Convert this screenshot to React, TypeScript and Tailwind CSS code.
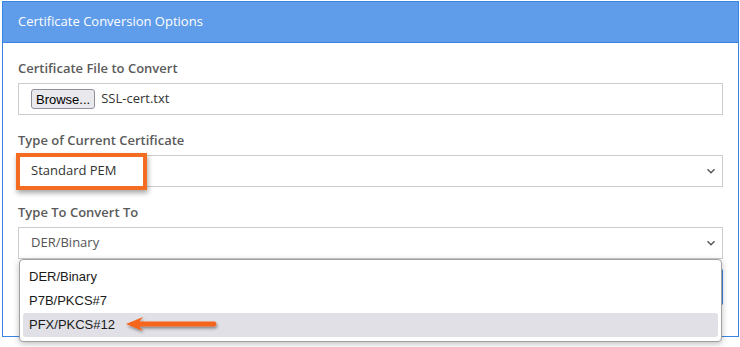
import React from 'react';

const Chevron: React.FC = () => (
  <svg width="10" height="6" viewBox="0 0 10 6" fill="none" className="mr-[6px]">
    <path d="M1.5 1.2l3.5 3.5 3.5-3.5" stroke="#555" strokeWidth="1.4" />
  </svg>
);

const Arrow: React.FC = () => (
  <svg width="100" height="20" viewBox="0 0 100 20" className="absolute left-[104px] top-[55px] overflow-visible">
    <defs>
      <filter id="arrowShadow" x="-10%" y="-50%" width="120%" height="200%">
        <feDropShadow dx="1" dy="2" stdDeviation="1.5" floodColor="#000" floodOpacity="0.4" />
      </filter>
    </defs>
    <g filter="url(#arrowShadow)">
      <path d="M2 9 L19 2 L15.5 6.6 L91 6.6 Q94 9 91 11.4 L15.5 11.4 L19 16 Z" fill="#f5651f" />
    </g>
  </svg>
);

const App: React.FC = () => {
  const labelCls = "text-[13px] leading-5 text-[#5a5a5a] font-semibold mb-[5px] font-['Open_Sans',sans-serif]";

  return (
    <div className="w-[740px] h-[347px] bg-white overflow-hidden pt-px pl-[2px]">
      <div className="w-[737px] border border-[#3b84e3]">
        {/* Header */}
        <div className="h-[41px] bg-[#5f9dea] border-b border-[#3b84e3] px-[15px] flex items-center text-white text-[13px] font-['Open_Sans',sans-serif]">
          Certificate Conversion Options
        </div>

        {/* Body */}
        <div className="px-[15px] pt-[15px] pb-[30px]">
          <div className={labelCls}>Certificate File to Convert</div>
          <div className="h-8 border border-[#ccc] flex items-center pl-3">
            <button className="h-[20px] px-[4px] rounded-[3px] border border-[#8f8f9d] bg-[#e9e9ed] text-[13px] text-black leading-none font-['Liberation_Sans',Arial,sans-serif]">
              Browse...
            </button>
            <span className="ml-[6px] text-[13px] text-[#333] font-['Open_Sans',sans-serif]">SSL-cert.txt</span>
          </div>

          <div className={`${labelCls} mt-[15px]`}>Type of Current Certificate</div>
          <div className="relative">
            <div className="h-8 border border-[#ccc] flex items-center justify-between pl-3 text-[13px] text-[#333] font-['Open_Sans',sans-serif]">
              <span>Standard PEM</span>
              <Chevron />
            </div>
            {/* highlight box */}
            <div className="absolute -left-[2px] -top-[2px] w-[131px] h-[37px] border-4 border-[#f36c21] shadow-[1px_3px_5px_rgba(0,0,0,0.35)]" />
          </div>

          <div className={`${labelCls} mt-[15px]`}>Type To Convert To</div>
          <div className="relative">
            <div className="h-8 border border-[#ccc] flex items-center justify-between pl-3 text-[13px] text-[#555] font-['Open_Sans',sans-serif]">
              <span>DER/Binary</span>
              <Chevron />
            </div>

            {/* open dropdown list */}
            <div className="absolute top-full left-px right-px z-10 bg-white border border-[#a0a0a0] rounded-[4px] shadow-[0_2px_6px_rgba(0,0,0,0.25)] px-[3px] pt-[5px] pb-[4px] text-[13px] text-[#1a1a1a] font-['Liberation_Sans',Arial,sans-serif]">
              <div className="h-6 flex items-center pl-[6px]">DER/Binary</div>
              <div className="h-6 flex items-center pl-[6px]">P7B/PKCS#7</div>
              <div className="h-6 flex items-center pl-[6px] bg-[#e0e0e6] rounded-[3px]">PFX/PKCS#12</div>
              <Arrow />
            </div>
          </div>

          <div className="flex justify-end mt-[9px]">
            <button className="h-[38px] w-[160px] bg-[#5f9dea] border border-[#3b84e3] rounded-[3px] text-white text-[13px] font-['Open_Sans',sans-serif]">
              Convert Certificate
            </button>
          </div>
        </div>
      </div>
    </div>
  );
};

export default App;
